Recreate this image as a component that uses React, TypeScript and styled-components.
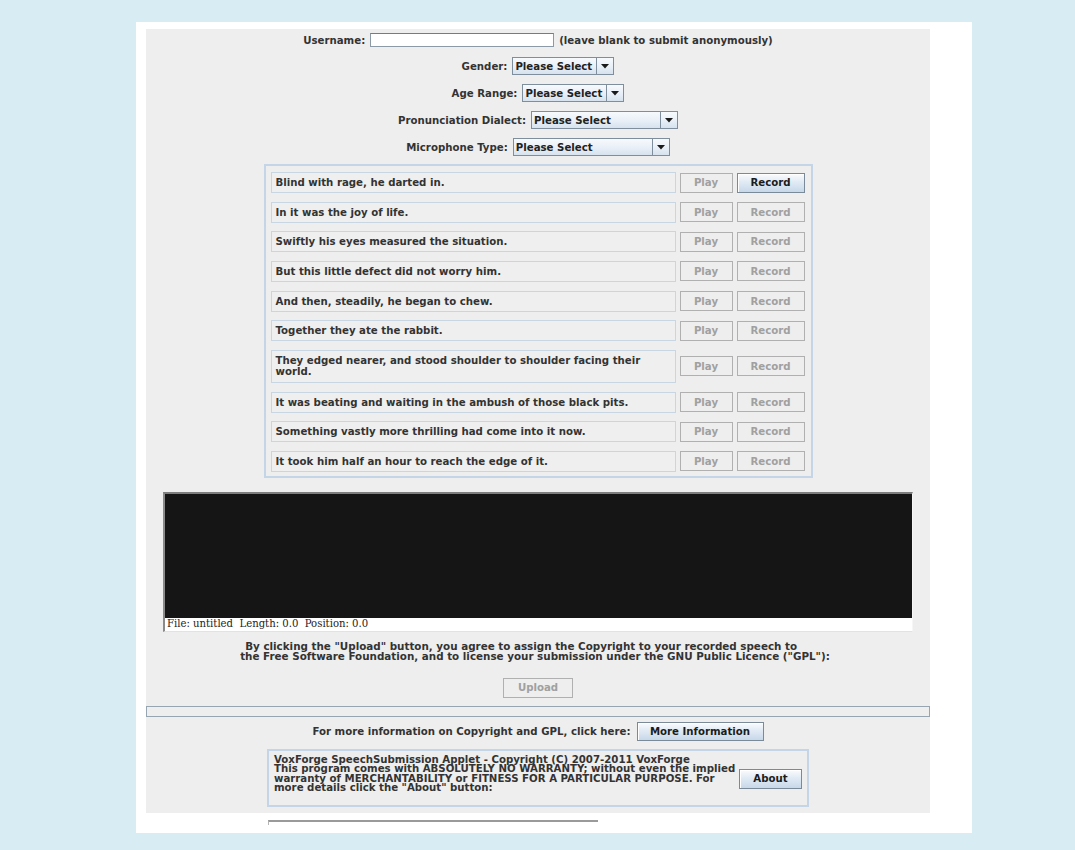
import React from "react";
import styled, { createGlobalStyle } from "styled-components";

const GlobalStyle = createGlobalStyle`
  html, body { margin: 0; padding: 0; background: #d7edf3; }
  body { font-family: "DejaVu Sans", Verdana, sans-serif; color: #2e2e2e; }
  * { box-sizing: border-box; }
`;

const Page = styled.div`
  padding: 22px 0 17px 136px;
`;

const Card = styled.div`
  width: 836px;
  height: 811px;
  background: #ffffff;
  padding: 7px 42px 0 10px;
`;

const Applet = styled.div`
  width: 784px;
  height: 784px;
  background: #eeeeee;
  display: flex;
  flex-direction: column;
  align-items: center;
`;

const FormRow = styled.div<{ $mt: number }>`
  display: flex;
  align-items: center;
  gap: 5px;
  margin-top: ${(p) => p.$mt}px;
`;

const Label = styled.span`
  font-size: 10.2px;
  font-weight: bold;
  color: #333333;
  white-space: nowrap;
`;

const TextField = styled.div`
  width: 184px;
  height: 14px;
  background: #ffffff;
  border: 1px solid #8c9aa8;
  border-top-color: #6f7d8b;
`;

const Combo = styled.div<{ $w: number }>`
  width: ${(p) => p.$w}px;
  height: 18px;
  display: flex;
  border: 1px solid #7f8e9d;
  background: linear-gradient(to bottom, #f7fafd 0%, #e8eff7 55%, #d6e2ee 100%);
`;

const ComboText = styled.div`
  flex: 1;
  font-size: 10.2px;
  font-weight: bold;
  color: #222;
  padding-left: 2px;
  line-height: 17px;
  white-space: nowrap;
`;

const ComboArrow = styled.div`
  width: 17px;
  border-left: 1px solid #7f8e9d;
  display: flex;
  align-items: center;
  justify-content: center;
`;

const SentencePanel = styled.div`
  margin-top: 8px;
  width: 549px;
  border: 2px solid #c3d5e7;
  padding: 6px 5px 4px 5px;
  display: flex;
  flex-direction: column;
  gap: 8.67px;
`;

const SentenceRow = styled.div`
  display: flex;
  align-items: center;
`;

const SentenceBox = styled.div<{ $tall?: boolean }>`
  width: 405px;
  height: ${(p) => (p.$tall ? 33 : 21)}px;
  border: 1px solid #c8d6e4;
  background: #efefef;
  padding: 0 4px;
  display: flex;
  align-items: center;
  font-size: 10.2px;
  font-weight: bold;
  color: #333333;
  line-height: 11px;
  margin-right: 4px;
`;

const Button = styled.div<{ $on?: boolean; $w: number; $h?: number }>`
  width: ${(p) => p.$w}px;
  height: ${(p) => p.$h ?? 20}px;
  flex: none;
  display: flex;
  align-items: center;
  justify-content: center;
  font-size: 10.2px;
  font-weight: bold;
  white-space: nowrap;
  border: 1px solid ${(p) => (p.$on ? "#7a8a99" : "#b0b0b0")};
  color: ${(p) => (p.$on ? "#1c1c1c" : "#a0a0a0")};
  background: ${(p) =>
    p.$on
      ? "linear-gradient(to bottom, #fbfcfe 0%, #e3ecf5 40%, #c7d8e9 100%)"
      : "#eeeeee"};
  box-shadow: ${(p) => (p.$on ? "inset 1px 1px 0 #ffffff" : "none")};
`;

const Gap = styled.div<{ $w: number }>`
  width: ${(p) => p.$w}px;
  flex: none;
`;

const Scope = styled.div`
  margin-top: 14px;
  width: 750px;
  border-top: 2px solid #7d7d7d;
  border-left: 2px solid #8a8a8a;
  border-right: 1px solid #f6f6f6;
  border-bottom: 1px solid #e2e2e2;
  display: flex;
  flex-direction: column;
`;

const ScopeScreen = styled.div`
  height: 124px;
  background: #151515;
`;

const ScopeStatus = styled.div`
  height: 13px;
  background: #ffffff;
  font-family: "DejaVu Serif", "Liberation Serif", serif;
  font-size: 10.1px;
  line-height: 12px;
  color: #222;
  padding-left: 2px;
  white-space: pre;
`;

const Notice = styled.div`
  margin-top: 9px;
  font-size: 10.35px;
  font-weight: bold;
  line-height: 10px;
  color: #333333;
  white-space: pre;
  transform: translateX(-3px);
`;

const NoticeLine = styled.div<{ $indent?: number }>`
  padding-left: ${(p) => p.$indent ?? 0}px;
`;

const ProgressBar = styled.div`
  margin-top: 8px;
  width: 784px;
  height: 11px;
  border: 1px solid #97a5b3;
  background: #eeeeee;
`;

const InfoRow = styled.div`
  margin-top: 5px;
  display: flex;
  align-items: center;
  gap: 6px;
`;

const AboutPanel = styled.div`
  margin-top: 8px;
  width: 542px;
  height: 58px;
  border: 2px solid #c3d5e7;
  padding: 4px 5px 0 5px;
  display: flex;
  align-items: flex-start;
`;

const AboutText = styled.div`
  width: 466px;
  font-size: 10.2px;
  font-weight: bold;
  line-height: 9.4px;
  color: #333333;
  white-space: pre;
`;

const AboutSide = styled.div`
  align-self: stretch;
  display: flex;
  align-items: center;
  padding-bottom: 2px;
`;

const BottomStub = styled.div`
  margin-top: 7px;
  margin-left: 122px;
  width: 330px;
  height: 5px;
  border-top: 2px solid #9a9a9a;
  border-left: 1px solid #b5b5b5;
`;

const Arrow = () => (
  <svg width="8" height="5" viewBox="0 0 8 5">
    <path d="M0 0 H8 L4 4.5 Z" fill="#1a1a1a" />
  </svg>
);

const ComboBox = ({ w }: { w: number }) => (
  <Combo $w={w}>
    <ComboText>Please Select</ComboText>
    <ComboArrow>
      <Arrow />
    </ComboArrow>
  </Combo>
);

const sentences: { text: React.ReactNode; tall?: boolean; active?: boolean }[] = [
  { text: "Blind with rage, he darted in.", active: true },
  { text: "In it was the joy of life." },
  { text: "Swiftly his eyes measured the situation." },
  { text: "But this little defect did not worry him." },
  { text: "And then, steadily, he began to chew." },
  { text: "Together they ate the rabbit." },
  {
    text: (
      <>
        They edged nearer, and stood shoulder to shoulder facing their
        <br />
        world.
      </>
    ),
    tall: true,
  },
  { text: "It was beating and waiting in the ambush of those black pits." },
  { text: "Something vastly more thrilling had come into it now." },
  { text: "It took him half an hour to reach the edge of it." },
];

export default function App() {
  return (
    <>
      <GlobalStyle />
      <Page>
        <Card>
          <Applet>
            <FormRow $mt={4}>
              <Label>Username:</Label>
              <TextField />
              <Label>(leave blank to submit anonymously)</Label>
            </FormRow>
            <FormRow $mt={10}>
              <Label>Gender:</Label>
              <ComboBox w={102} />
            </FormRow>
            <FormRow $mt={9}>
              <Label>Age Range:</Label>
              <ComboBox w={102} />
            </FormRow>
            <FormRow $mt={9}>
              <Label>Pronunciation Dialect:</Label>
              <ComboBox w={147} />
            </FormRow>
            <FormRow $mt={9}>
              <Label>Microphone Type:</Label>
              <ComboBox w={157} />
            </FormRow>

            <SentencePanel>
              {sentences.map((s, i) => (
                <SentenceRow key={i}>
                  <SentenceBox $tall={s.tall}>
                    <span>{s.text}</span>
                  </SentenceBox>
                  <Button $w={53}>Play</Button>
                  <Gap $w={4} />
                  <Button $w={68} $on={s.active}>
                    Record
                  </Button>
                </SentenceRow>
              ))}
            </SentencePanel>

            <Scope>
              <ScopeScreen />
              <ScopeStatus>File: untitled  Length: 0.0  Position: 0.0</ScopeStatus>
            </Scope>

            <Notice>
              <NoticeLine $indent={5}>
                By clicking the "Upload" button, you agree to assign the Copyright to your recorded speech to
              </NoticeLine>
              <NoticeLine>
                the Free Software Foundation, and to license your submission under the GNU Public Licence ("GPL"):
              </NoticeLine>
            </Notice>

            <Button $w={70} style={{ marginTop: 17 }}>
              Upload
            </Button>

            <ProgressBar />

            <InfoRow>
              <Label>For more information on Copyright and GPL, click here:</Label>
              <Button $w={127} $h={19} $on>
                More Information
              </Button>
            </InfoRow>

            <AboutPanel>
              <AboutText>
                {"VoxForge SpeechSubmission Applet - Copyright (C) 2007-2011 VoxForge\nThis program comes with ABSOLUTELY NO WARRANTY; without even the implied\nwarranty of MERCHANTABILITY or FITNESS FOR A PARTICULAR PURPOSE. For\nmore details click the \"About\" button:"}
              </AboutText>
              <AboutSide>
                <Button $w={63} $on>
                  About
                </Button>
              </AboutSide>
            </AboutPanel>
          </Applet>
          <BottomStub />
        </Card>
      </Page>
    </>
  );
}
